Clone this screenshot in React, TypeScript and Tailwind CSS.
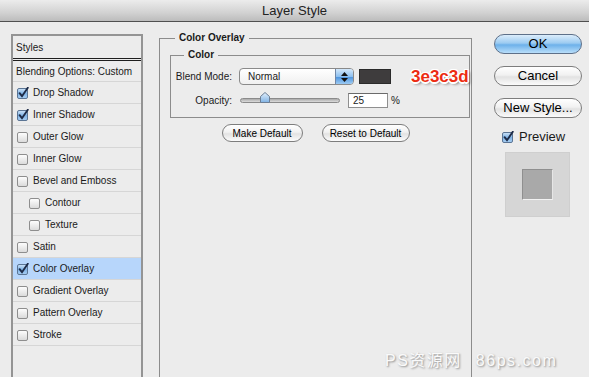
import React from 'react';

const styleRows: { label: string; checked?: boolean; indent?: boolean; active?: boolean }[] = [
  { label: 'Drop Shadow', checked: true },
  { label: 'Inner Shadow', checked: true },
  { label: 'Outer Glow' },
  { label: 'Inner Glow' },
  { label: 'Bevel and Emboss' },
  { label: 'Contour', indent: true },
  { label: 'Texture', indent: true },
  { label: 'Satin' },
  { label: 'Color Overlay', checked: true, active: true },
  { label: 'Gradient Overlay' },
  { label: 'Pattern Overlay' },
  { label: 'Stroke' },
];

function Checkbox({ checked }: { checked?: boolean }) {
  return (
    <svg width="12" height="12" viewBox="0 0 12 12" className="flex-shrink-0">
      <defs>
        <linearGradient id="cbOff" x1="0" y1="0" x2="0" y2="1">
          <stop offset="0" stopColor="#ffffff" />
          <stop offset="1" stopColor="#d9d9d9" />
        </linearGradient>
        <linearGradient id="cbOn" x1="0" y1="0" x2="0" y2="1">
          <stop offset="0" stopColor="#cfe4f8" />
          <stop offset="0.5" stopColor="#7fb3e6" />
          <stop offset="1" stopColor="#a9cff3" />
        </linearGradient>
      </defs>
      <rect
        x="0.5"
        y="1.5"
        width="10"
        height="10"
        rx="1.5"
        fill={checked ? 'url(#cbOn)' : 'url(#cbOff)'}
        stroke={checked ? '#5b7594' : '#8e8e8e'}
      />
      {checked && (
        <path d="M2.6 6.2 L5 9.2 L10.8 0.8" stroke="#1d2b47" strokeWidth="1.9" fill="none" strokeLinecap="round" />
      )}
    </svg>
  );
}

function MacButton({ children, width, primary }: { children: React.ReactNode; width: string; primary?: boolean }) {
  return (
    <div
      className={[
        'flex items-center justify-center rounded-full border text-black',
        width,
        primary
          ? 'border-[#5e7089] bg-[linear-gradient(#dcedfb,#9ccbf1_45%,#6db1ea_55%,#b9defa)]'
          : 'border-[#7d7d7d] bg-[linear-gradient(#ffffff,#f1f1f1_45%,#e2e2e2_55%,#fbfbfb)]',
      ].join(' ')}
    >
      {children}
    </div>
  );
}

export default function App() {
  return (
    <div className="relative w-[589px] h-[377px] overflow-hidden bg-[#ececec] font-['Liberation_Sans',Arial,sans-serif] text-[#1a1a1a]">
      {/* Title bar */}
      <div className="h-[22px] flex items-center justify-center border-b border-[#505050] bg-[linear-gradient(#ececec,#d2d2d2_60%,#bcbcbc)] text-[13px] text-[#222]">
        Layer Style
      </div>

      <div className="flex">
        {/* Styles list */}
        <div className="ml-[11px] mt-[12px] w-[132px] h-[343px] border-2 border-b-0 border-[#949494] text-[10px]">
          <div className="h-[25px] flex items-center pl-[3px] border-b-[3px] border-double border-[#1e1e1e]">
            Styles
          </div>
          <div className="h-[21px] flex items-center pl-[3px] border-b border-[#d6d6d6]">
            Blending Options: Custom
          </div>
          {styleRows.map((row) => (
            <div
              key={row.label}
              className={[
                'h-[22px] flex items-center gap-[4px] border-b border-[#d6d6d6]',
                row.indent ? 'pl-[16px]' : 'pl-[4px]',
                row.active ? 'bg-[#b7d6fb]' : '',
              ].join(' ')}
            >
              <Checkbox checked={row.checked} />
              <span>{row.label}</span>
            </div>
          ))}
        </div>

        {/* Color Overlay group */}
        <fieldset className="ml-[16px] mt-[9px] w-[313px] h-[370px] border border-[#8c8c8c] text-[10px]">
          <legend className="ml-[15px] px-[4px] h-[14px] leading-[14px] font-bold">Color Overlay</legend>

          <fieldset className="ml-[10px] mt-[3px] w-[292px] border border-[#8c8c8c] pb-[10px]">
            <legend className="ml-[13px] px-[4px] h-[14px] leading-[14px] font-bold">Color</legend>

            <div className="mt-[6px] h-[17px] flex items-center">
              <span className="w-[61px] text-right">Blend Mode:</span>
              <div className="ml-[7px] w-[115px] h-[17px] flex rounded-[4px] border border-[#8a8a8a] bg-[linear-gradient(#ffffff,#f0f0f0)] overflow-hidden">
                <span className="flex-1 pl-[8px] leading-[15px]">Normal</span>
                <div className="w-[18px] flex flex-col items-center justify-center gap-[2px] border-l border-[#6f86a6] bg-[linear-gradient(#d4e8fb,#8dc0ef_50%,#4f95de_55%,#9ccaf3)]">
                  <svg width="7" height="4" viewBox="0 0 7 4"><path d="M0 4 L3.5 0 L7 4 Z" fill="#111" /></svg>
                  <svg width="7" height="4" viewBox="0 0 7 4"><path d="M0 0 L3.5 4 L7 0 Z" fill="#111" /></svg>
                </div>
              </div>
              <div className="ml-[5px] w-[32px] h-[15px] bg-[#3e3c3d] border border-[#2a2a2a]" />
              <span className="ml-[20px] relative z-10 text-[17px] font-bold text-[#ec2c12] [text-shadow:-1px_-1px_0_#fff,1px_-1px_0_#fff,-1px_1px_0_#fff,1px_1px_0_#fff,0_-1.5px_0_#fff,1.5px_0_0_#fff,-1.5px_0_0_#fff,0_1.5px_0_#fff,2px_2px_3px_rgba(0,0,0,0.6)]">
                3e3c3d
              </span>
            </div>

            <div className="mt-[8px] h-[14px] flex items-center">
              <span className="w-[61px] text-right">Opacity:</span>
              <div className="ml-[8px] w-[100px] h-[12px] relative flex items-center">
                <div className="w-full h-[5px] rounded-full border border-[#8a8a8a] bg-[linear-gradient(#a9a9a9,#dcdcdc)]" />
                <svg width="10" height="11" viewBox="0 0 10 11" className="absolute left-[20px] top-[-2px]">
                  <defs>
                    <linearGradient id="thumb" x1="0" y1="0" x2="0" y2="1">
                      <stop offset="0" stopColor="#e3f0fc" />
                      <stop offset="1" stopColor="#7fb2e4" />
                    </linearGradient>
                  </defs>
                  <path d="M0.5 4.5 L5 0.5 L9.5 4.5 L9.5 10.5 L0.5 10.5 Z" fill="url(#thumb)" stroke="#6c7e95" />
                </svg>
              </div>
              <div className="ml-[8px] w-[40px] h-[15px] bg-white border border-[#8f8f8f] border-t-[#6a6a6a] pl-[4px] leading-[13px]">25</div>
              <span className="ml-[3px]">%</span>
            </div>
          </fieldset>

          <div className="mt-[6px] flex justify-center gap-[19px]">
            <MacButton width="w-[81px] h-[18px]">Make Default</MacButton>
            <MacButton width="w-[88px] h-[18px]">Reset to Default</MacButton>
          </div>
        </fieldset>

        {/* Right column */}
        <div className="ml-[22px] w-[88px] flex flex-col text-[13px]">
          <div className="mt-[12px] flex flex-col gap-[12px]">
            <MacButton width="w-[88px] h-[20px]" primary>OK</MacButton>
            <MacButton width="w-[88px] h-[20px]">Cancel</MacButton>
            <MacButton width="w-[88px] h-[20px]">New Style...</MacButton>
          </div>
          <div className="mt-[12px] h-[13px] pl-[8px] flex items-center gap-[5px]">
            <Checkbox checked />
            <span>Preview</span>
          </div>
          <div className="mt-[9px] ml-[11px] w-[65px] h-[65px] bg-[#d6d6d6] border border-[#cfcfcf] flex items-center justify-center">
            <div className="w-[31px] h-[31px] bg-[#a9a9a9] border border-[#8f8f8f] border-b-[#f2f2f2] border-r-[#e6e6e6]" />
          </div>
        </div>
      </div>

      {/* Watermark */}
      <div className="absolute left-[385px] top-[349px] flex items-center text-[16px] text-[#fafafa] [text-shadow:1px_1px_2px_#8a8a8a] font-['Liberation_Sans','Noto_Sans_CJK_SC',sans-serif]">
        <span className="tracking-[1.5px]">PS资源网</span>
        <span className="ml-[14px] tracking-[1.5px]">86ps.com</span>
      </div>
    </div>
  );
}
